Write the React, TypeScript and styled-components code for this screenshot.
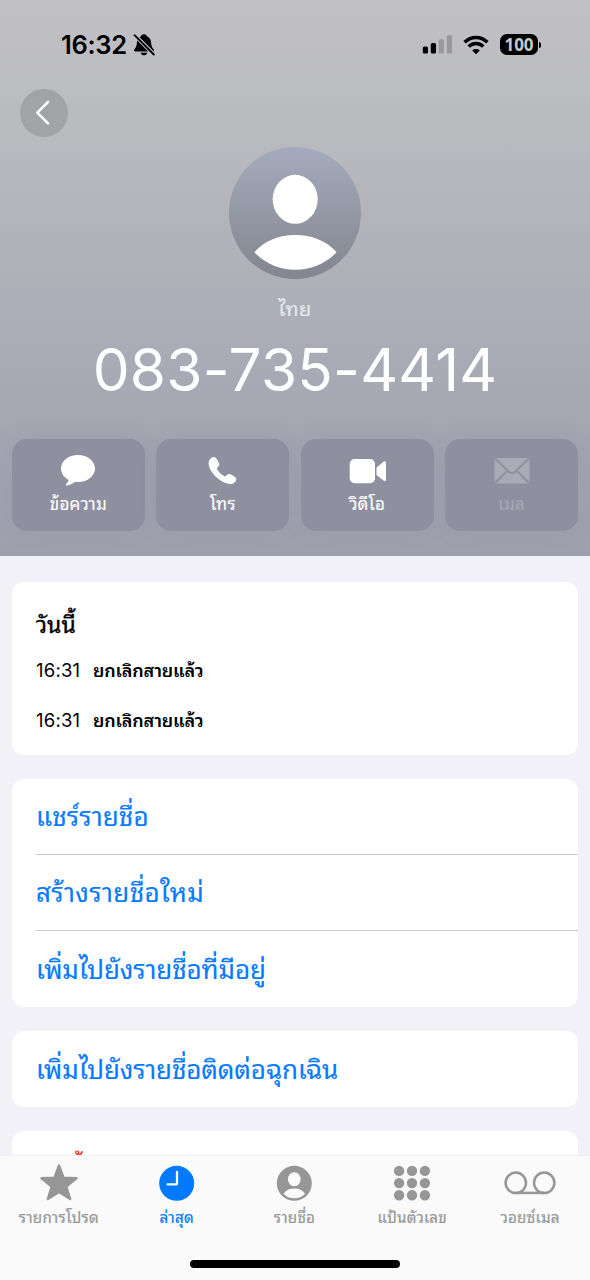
import React from 'react';
import styled, { createGlobalStyle } from 'styled-components';

const GlobalStyle = createGlobalStyle`
  * { box-sizing: border-box; }
  body {
    margin: 0;
    background: #f2f1f7;
    font-family: Inter, Thonburi, 'Noto Sans Thai Looped', Loma, Waree, 'Noto Sans Thai', 'Noto Sans', 'Liberation Sans', sans-serif;
    color: #000;
    overflow: hidden;
  }
`;

const Screen = styled.div`
  width: 590px;
  height: 1280px;
  display: flex;
  flex-direction: column;
  background: #f2f1f7;
  overflow: hidden;
`;

const Header = styled.header`
  flex: none;
  height: 556px;
  display: flex;
  flex-direction: column;
  background: linear-gradient(180deg, #c1c1c5 0%, #b9babe 25%, #abadb7 58%, #a2a4b1 82%, #9fa0ad 100%);
`;

const StatusBar = styled.div`
  display: flex;
  align-items: center;
  height: 89px;
  padding: 0 49px 0 61px;
`;

const Clock = styled.span`
  font-size: 25.5px;
  font-weight: 600;
  line-height: 30px;
  letter-spacing: -0.3px;
  width: 71.5px;
  white-space: nowrap;
`;

const StatusIcons = styled.div`
  margin-left: auto;
  display: flex;
  align-items: center;
  gap: 11px;
`;

const Battery = styled.div`
  display: flex;
  align-items: center;
  gap: 1px;
`;

const BatteryBody = styled.span`
  width: 38px;
  height: 21px;
  border-radius: 7px;
  background: #000;
  color: #c8c8cb;
  font-family: 'Open Sans', 'Noto Sans', sans-serif;
  font-size: 17px;
  font-weight: 700;
  line-height: 21px;
  text-align: center;
`;

const BatteryCap = styled.span`
  width: 2px;
  height: 6px;
  border-radius: 0 2px 2px 0;
  background: #000;
`;

const BackButton = styled.button`
  width: 48px;
  height: 48px;
  margin-left: 19.5px;
  padding: 0;
  border: 0;
  border-radius: 50%;
  background: #a2a3a6;
  display: flex;
  align-items: center;
  justify-content: center;
`;

const Profile = styled.div`
  display: flex;
  flex-direction: column;
  align-items: center;
  margin-top: 10px;
`;

const Region = styled.span`
  margin-top: 16px;
  height: 29px;
  line-height: 28px;
  font-size: 20px;
  letter-spacing: 0.4px;
  color: #e6e7ed;
  -webkit-text-stroke: 0.2px;
`;

const PhoneNumber = styled.h1`
  margin: 11px 0 0;
  height: 71px;
  line-height: 70px;
  font-size: 58.5px;
  font-weight: 400;
  letter-spacing: 0.25px;
  color: #fff;
  white-space: nowrap;
`;

const Actions = styled.div`
  display: grid;
  grid-template-columns: repeat(4, 1fr);
  gap: 11.6px;
  padding: 0 12px;
  margin-top: 33px;
`;

const ActionButton = styled.button<{ $disabled?: boolean }>`
  height: 92px;
  padding: 15px 0 0;
  border: 0;
  border-radius: 15px;
  background: #8e909f;
  box-shadow: 0 0 20px rgba(120, 122, 140, 0.14);
  color: ${(p) => (p.$disabled ? '#a6a8b4' : '#fff')};
  font-family: inherit;
  display: flex;
  flex-direction: column;
  align-items: center;
`;

const ActionLabel = styled.span`
  margin-top: 3px;
  font-size: 17px;
  letter-spacing: 0.2px;
  line-height: 28px;
  white-space: nowrap;
  -webkit-text-stroke: 0.1px;
`;

const Content = styled.main`
  flex: 1;
  min-height: 0;
  overflow: hidden;
  display: flex;
  flex-direction: column;
  gap: 24px;
  padding: 26px 12px 0;
`;

const Card = styled.section`
  flex: none;
  background: #fff;
  border-radius: 12px;
`;

const LogCard = styled(Card)`
  height: 173px;
  padding: 27px 24px 0;
`;

const LogTitle = styled.h2`
  margin: 0;
  height: 36px;
  line-height: 33px;
  font-size: 23px;
  font-weight: 400;
  -webkit-text-stroke: 0.35px;
`;

const LogRow = styled.div`
  display: flex;
  align-items: center;
  height: 50px;
  font-size: 18.5px;
`;

const LogTime = styled.span`
  width: 57px;
  letter-spacing: 0.2px;
`;

const LogText = styled.span`
  font-weight: 600;
  font-size: 18px;
  letter-spacing: -0.15px;
  padding-bottom: 2px;
`;

const LinkRow = styled.div<{ $color?: string; $tracking?: number }>`
  height: 76px;
  margin-left: 24px;
  padding-bottom: 5px;
  display: flex;
  align-items: center;
  font-size: 26px;
  letter-spacing: ${(p) => p.$tracking ?? 0}px;
  -webkit-text-stroke: 0.15px;
  color: ${(p) => p.$color || '#087aff'};
  white-space: nowrap;
  &:not(:last-child) { border-bottom: 1px solid #c9c9cb; }
`;

const BlockRow = styled(LinkRow)`
  font-size: 25px;
  padding-bottom: 4px;
`;

const TabBar = styled.nav`
  flex: none;
  height: 125px;
  display: flex;
  flex-direction: column;
  align-items: center;
  justify-content: space-between;
  background: #fafafa;
  border-top: 1px solid #f0f0f1;
  padding-bottom: 12px;
`;

const Tabs = styled.div`
  width: 100%;
  padding-right: 1px;
  display: grid;
  grid-template-columns: repeat(5, 1fr);
`;

const Tab = styled.div<{ $active?: boolean }>`
  display: flex;
  flex-direction: column;
  align-items: center;
  padding-top: 7px;
  color: ${(p) => (p.$active ? '#007aff' : '#969696')};
`;

const TabLabel = styled.span`
  font-size: 15.2px;
  letter-spacing: 0.25px;
  font-weight: 400;
  -webkit-text-stroke: 0.2px;
  line-height: 24px;
  margin-top: 3px;
  white-space: nowrap;
`;

const HomeIndicator = styled.div`
  width: 210px;
  height: 8px;
  border-radius: 4px;
  background: #000;
`;

const BellOff = () => (
  <svg width="22" height="24" viewBox="0 0 22 24">
    <path d="M11 1.200c1.700 0 2.900 1 3.200 2.400 2.500 1 3.700 3.100 3.900 6 .2 3.500.9 4.900 2.500 6.700.8 1 .5 2.200-.9 2.200H2.300c-1.400 0-1.700-1.200-.9-2.200 1.600-1.800 2.300-3.200 2.500-6.700.2-2.900 1.400-5 3.900-6C8.100 2.200 9.300 1.200 11 1.200zM7.700 19.700h6.600c-.2 1.500-1.500 2.600-3.300 2.600s-3.100-1.100-3.300-2.600z" fill="#000" />
    <path d="M1 1.500 21.500 22" stroke="#bebfc3" strokeWidth="4" />
    <path d="M1.500 2.200 20.800 21.500" stroke="#000" strokeWidth="1.800" strokeLinecap="round" />
  </svg>
);

const Signal = () => (
  <svg width="30" height="19" viewBox="0 0 30 19">
    <rect x="0.800" y="11.500" width="5.200" height="7" rx="1.500" fill="#000" />
    <rect x="8.800" y="8" width="5.200" height="10.500" rx="1.500" fill="#000" />
    <rect x="16.800" y="4.200" width="5.200" height="14.300" rx="1.500" fill="#98999c" />
    <rect x="24.800" y="0.300" width="5.200" height="18.200" rx="1.500" fill="#98999c" />
  </svg>
);

const Wifi = () => (
  <svg width="26" height="20" viewBox="0 0 26 20" fill="none" stroke="#000">
    <path d="M1.600 7.300C8.200.9 17.800.9 24.400 7.300" strokeWidth="3.600" />
    <path d="M5.700 11.500c4.300-4 10.300-4 14.600 0" strokeWidth="3.500" />
    <path d="M13 19.300l-3.800-3.800c2.100-1.900 5.500-1.900 7.600 0z" fill="#000" stroke="none" />
  </svg>
);

const Chevron = () => (
  <svg width="48" height="48" viewBox="0 0 48 48" fill="none">
    <path d="M28 13 17.300 23.700 28 34.300" stroke="#fff" strokeWidth="2.500" strokeLinejoin="round" strokeLinecap="round" />
  </svg>
);

const Avatar = () => (
  <svg width="132" height="132" viewBox="0 0 132 132">
    <defs>
      <linearGradient id="avatar" x1="0" y1="0" x2="0" y2="1">
        <stop offset="0" stopColor="#a4abbc" />
        <stop offset="1" stopColor="#83868f" />
      </linearGradient>
    </defs>
    <circle cx="66" cy="66" r="66" fill="url(#avatar)" />
    <ellipse cx="66.200" cy="52.300" rx="22.500" ry="24.500" fill="#fff" />
    <path d="M26 104.500C36 93.500 50 88 66.300 88S97 93.500 107 104.500c.3.400.3.900 0 1.300C96 117 82 122.700 66.300 122.700S37 117 26 105.800c-.4-.4-.4-.9 0-1.300z" fill="#fff" />
  </svg>
);

const MessageIcon = () => (
  <svg width="36" height="33" viewBox="0 0 36 33">
    <path d="M18 1C8.500 1 1 7 1 14.500c0 4.600 2.700 8.500 7 11 .6.400.7.900.4 1.500-.5 1-1.300 2-2.200 3-.6.800-.2 1.500.7 1.400 3.300-.4 6.100-1.700 8.300-3.600.9.200 1.800.2 2.800.2 9.500 0 17-6 17-13.500S27.500 1 18 1z" fill="currentColor" />
  </svg>
);

const PhoneIcon = () => (
  <svg width="30" height="33" viewBox="0 0 30 33">
    <path d="M2.200 4.900C3.400 3.700 4.800 2.600 6.300 3c1 .2 1.700 1 2.400 2l2 3.400c.9 1.600.7 2.900-.4 4.100l-1 1.100c-.5.600-.5 1.100-.1 1.800 1.700 2.700 4.200 5.100 7 6.700.7.400 1.200.3 1.700-.2l1.200-1.100c1.200-1.100 2.400-1.200 3.900-.3l3.700 2.200c1.900 1.300 2 3.100.7 4.700-1.400 1.800-3.400 2.900-5.900 2.600-5.100-.6-10.500-3.900-14.700-8.200C2.700 17.500.6 13 .6 9.200c0-1.700.5-3.200 1.600-4.300z" fill="currentColor" />
  </svg>
);

const VideoIcon = () => (
  <svg width="38" height="33" viewBox="0 0 38 33" fill="currentColor">
    <rect x="1.700" y="5" width="25.300" height="24.300" rx="5" />
    <path d="M28.500 13.600l7.300-6c1.100-.9 2.200-.4 2.200 1v17.200c0 1.400-1.100 1.900-2.200 1l-7.300-5.900z" />
  </svg>
);

const MailIcon = () => (
  <svg width="36" height="33" viewBox="0 0 36 33">
    <rect x="0.500" y="4" width="35" height="25.500" rx="1.500" fill="#a8aab6" />
    <path d="M1 4.500l13.500 13c2.300 2.100 4.700 2.100 7 0L35 4.500M1 29l12.500-12.500M35 29 22.500 16.500" stroke="#8e909f" strokeWidth="1.800" fill="none" />
  </svg>
);

const StarIcon = () => (
  <svg width="40" height="40" viewBox="0 0 40 40">
    <path d="M20 2.500l4.600 12.300 12.900.5-10.200 8.200 3.900 12.600L20 28.900 8.800 36.100l3.900-12.600-10.200-8.200 12.900-.5z" fill="currentColor" stroke="currentColor" strokeWidth="2.400" strokeLinejoin="round" />
  </svg>
);

const ClockIcon = () => (
  <svg width="40" height="40" viewBox="0 0 40 40">
    <circle cx="19.700" cy="20.300" r="17.500" fill="currentColor" />
    <path d="M20 9v12.300H10.500" stroke="#fafafa" strokeWidth="2.300" fill="none" strokeLinecap="round" strokeLinejoin="round" />
  </svg>
);

const PersonIcon = () => (
  <svg width="40" height="40" viewBox="0 0 40 40">
    <circle cx="20.300" cy="20.300" r="17.500" fill="currentColor" />
    <ellipse cx="20.300" cy="16.300" rx="6.300" ry="7" fill="#fafafa" />
    <path d="M9.500 30.800c2.200-3.400 6.100-5.200 10.800-5.200s8.600 1.800 10.800 5.200c-2.900 3-6.500 4.500-10.800 4.500s-7.900-1.500-10.800-4.500z" fill="#fafafa" />
  </svg>
);

const KeypadIcon = () => (
  <svg width="40" height="40" viewBox="0 0 40 40" fill="currentColor">
    {[7.9, 20.1, 32.2].map((y) => [7.1, 20, 32.9].map((x) => <circle key={`${x}-${y}`} cx={x} cy={y} r="5.200" />))}
  </svg>
);

const VoicemailIcon = () => (
  <svg width="54" height="40" viewBox="0 0 54 40" fill="none" stroke="currentColor" strokeWidth="2.500">
    <circle cx="12.800" cy="19.800" r="10.200" />
    <circle cx="41.200" cy="19.800" r="10.200" />
    <path d="M12.800 29.900h28.400" />
  </svg>
);

const actions = [
  { label: 'ข้อความ', icon: <MessageIcon /> },
  { label: 'โทร', icon: <PhoneIcon /> },
  { label: 'วิดีโอ', icon: <VideoIcon /> },
  { label: 'เมล', icon: <MailIcon />, disabled: true },
];

const tabs = [
  { label: 'รายการโปรด', icon: <StarIcon /> },
  { label: 'ล่าสุด', icon: <ClockIcon />, active: true },
  { label: 'รายชื่อ', icon: <PersonIcon /> },
  { label: 'แป้นตัวเลข', icon: <KeypadIcon /> },
  { label: 'วอยซ์เมล', icon: <VoicemailIcon /> },
];

export default function App() {
  return (
    <Screen>
      <GlobalStyle />
      <Header>
        <StatusBar>
          <Clock>16:32</Clock>
          <BellOff />
          <StatusIcons>
            <Signal />
            <Wifi />
            <Battery>
              <BatteryBody>100</BatteryBody>
              <BatteryCap />
            </Battery>
          </StatusIcons>
        </StatusBar>
        <BackButton><Chevron /></BackButton>
        <Profile>
          <Avatar />
          <Region>ไทย</Region>
          <PhoneNumber>083-735-4414</PhoneNumber>
        </Profile>
        <Actions>
          {actions.map((a) => (
            <ActionButton key={a.label} $disabled={a.disabled}>
              {a.icon}
              <ActionLabel>{a.label}</ActionLabel>
            </ActionButton>
          ))}
        </Actions>
      </Header>
      <Content>
        <LogCard>
          <LogTitle>วันนี้</LogTitle>
          <LogRow><LogTime>16:31</LogTime><LogText>ยกเลิกสายแล้ว</LogText></LogRow>
          <LogRow><LogTime>16:31</LogTime><LogText>ยกเลิกสายแล้ว</LogText></LogRow>
        </LogCard>
        <Card>
          <LinkRow $tracking={0.12}>แชร์รายชื่อ</LinkRow>
          <LinkRow $tracking={0.4}>สร้างรายชื่อใหม่</LinkRow>
          <LinkRow $tracking={-0.1}>เพิ่มไปยังรายชื่อที่มีอยู่</LinkRow>
        </Card>
        <Card>
          <LinkRow $tracking={-0.12}>เพิ่มไปยังรายชื่อติดต่อฉุกเฉิน</LinkRow>
        </Card>
        <Card>
          <BlockRow $color="#e8413a">ปิดกั้นผู้โทร</BlockRow>
        </Card>
      </Content>
      <TabBar>
        <Tabs>
          {tabs.map((t) => (
            <Tab key={t.label} $active={t.active}>
              {t.icon}
              <TabLabel>{t.label}</TabLabel>
            </Tab>
          ))}
        </Tabs>
        <HomeIndicator />
      </TabBar>
    </Screen>
  );
}
